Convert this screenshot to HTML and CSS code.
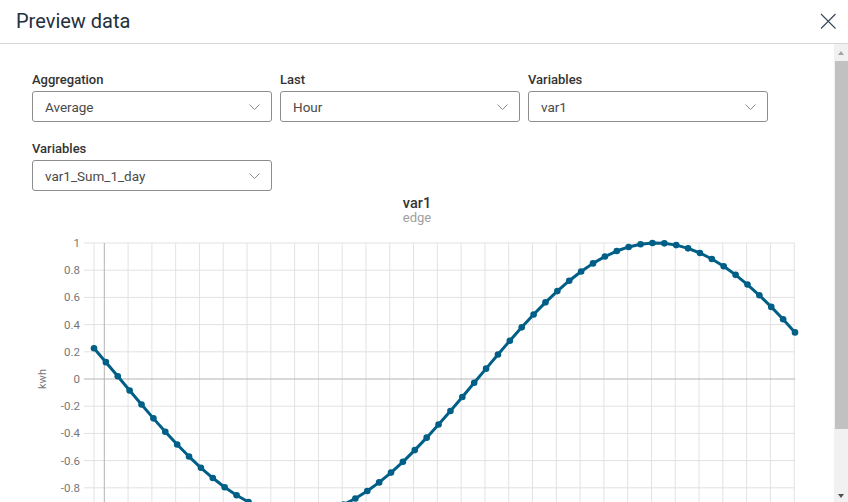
FILE: index.html
```html
<!DOCTYPE html>
<html>
<head>
<meta charset="utf-8">
<title>Preview data</title>
<link rel="stylesheet" href="styles.css">
</head>
<body>
<div class="dialog">
  <header class="dialog-header">
    <h1 class="dialog-title">Preview data</h1>
    <button class="close-btn" aria-label="Close">
      <svg width="16" height="16" viewBox="0 0 16 16"><path d="M1 1L15.5 15.5M15.5 1L1 15.5" stroke="#34465a" stroke-width="1.1" fill="none"/></svg>
    </button>
  </header>
  <div class="dialog-body">
    <div class="content">
      <div class="form">
        <div class="field">
          <label class="field-label">Aggregation</label>
          <div class="select"><span class="select-value">Average</span><svg class="chev" width="11" height="6" viewBox="0 0 11 6"><path d="M0.5 0.5L5.5 5.5L10.5 0.5" stroke="#8a8a8a" stroke-width="1" fill="none"/></svg></div>
        </div>
        <div class="field">
          <label class="field-label">Last</label>
          <div class="select"><span class="select-value">Hour</span><svg class="chev" width="11" height="6" viewBox="0 0 11 6"><path d="M0.5 0.5L5.5 5.5L10.5 0.5" stroke="#8a8a8a" stroke-width="1" fill="none"/></svg></div>
        </div>
        <div class="field">
          <label class="field-label">Variables</label>
          <div class="select"><span class="select-value">var1</span><svg class="chev" width="11" height="6" viewBox="0 0 11 6"><path d="M0.5 0.5L5.5 5.5L10.5 0.5" stroke="#8a8a8a" stroke-width="1" fill="none"/></svg></div>
        </div>
        <div class="field">
          <label class="field-label">Variables</label>
          <div class="select"><span class="select-value">var1_Sum_1_day</span><svg class="chev" width="11" height="6" viewBox="0 0 11 6"><path d="M0.5 0.5L5.5 5.5L10.5 0.5" stroke="#8a8a8a" stroke-width="1" fill="none"/></svg></div>
        </div>
      </div>
      <svg id="chart" class="chart" width="834" height="312" viewBox="0 0 834 312"></svg>
    </div>
    <div class="scrollbar">
      <div class="sb-btn"><span class="arrow-up"></span></div>
      <div class="sb-thumb"></div>
      <div class="sb-track"></div>
      <div class="sb-btn"><span class="arrow-down"></span></div>
    </div>
  </div>
</div>
<script src="chart.js"></script>
</body>
</html>
```

FILE: styles.css
```css
* { box-sizing: border-box; }
html, body { margin: 0; padding: 0; background: #fff; }
body { font-family: Roboto, "Liberation Sans", sans-serif; color: #333; }

.dialog { width: 848px; height: 502px; display: flex; flex-direction: column; overflow: hidden; background: #fff; }

.dialog-header {
  height: 44px; flex: none;
  display: flex; align-items: center; justify-content: space-between;
  padding: 0 12px 0 16px;
  border-bottom: 1px solid #d6d6d6;
}
.dialog-title { margin: 0; font-size: 20px; font-weight: 400; color: #23303e; line-height: 24px; padding-bottom: 1px; }
.close-btn { border: 0; background: none; padding: 0; width: 16px; height: 16px; display: flex; margin-bottom: 2px; }

.dialog-body { flex: 1; display: flex; min-height: 0; }
.content { flex: 1; overflow: hidden; }

.form {
  display: grid;
  grid-template-columns: repeat(3, 240px);
  column-gap: 8px;
  row-gap: 19px;
  padding: 28px 0 0 32px;
}
.field-label { display: block; font-size: 13px; line-height: 16px; font-weight: 500; color: #333; margin-bottom: 3px; }
.select {
  height: 31px;
  border: 1px solid #8d8d8d; border-radius: 3px;
  display: flex; align-items: center; justify-content: space-between;
  padding: 0 11px 0 12px;
}
.select-value { font-size: 13.5px; color: #4a4a4a; }
.chev { display: block; }

.chart { display: block; }

.scrollbar { width: 14px; flex: none; display: flex; flex-direction: column; background: #f1f1f1; }
.sb-btn { height: 17px; display: flex; align-items: center; justify-content: center; }
.sb-thumb { height: 368px; background: #c1c1c1; margin-left: 1px; }
.sb-track { flex: 1; }
.arrow-up { width: 0; height: 0; border-left: 3.5px solid transparent; border-right: 3.5px solid transparent; border-bottom: 4px solid #a3a3a3; margin-top: 1px; }
.arrow-down { width: 0; height: 0; border-left: 3.5px solid transparent; border-right: 3.5px solid transparent; border-top: 4px solid #505050; margin-top: 4px; }
```

FILE: chart.js
```js
(function () {
  var svg = document.getElementById('chart');
  var TOP = 191;
  function Y(v) { return 379 - 136 * v - TOP; }
  var s = '';
  var x0 = 94, x1 = 795;
  // title
  s += '<text x="417" y="16.5" text-anchor="middle" font-family="Roboto, sans-serif" font-size="14.5" font-weight="500" fill="#333">var1</text>';
  s += '<text x="417" y="31" text-anchor="middle" font-family="Roboto, sans-serif" font-size="13" fill="#a0a0a0">edge</text>';
  // horizontal grid
  for (var k = -7; k <= 5; k++) {
    var y = Y(k * 0.2);
    if (k !== 0) s += '<line x1="84" x2="795" y1="' + y + '" y2="' + y + '" stroke="#e2e2e2" stroke-width="1"/>';
  }
  // vertical grid
  var vx = [94];
  for (var j = 0; j <= 29; j++) vx.push(104.3 + j * 23.79);
  vx.forEach(function (x, idx) {
    if (idx === 1) return;
    s += '<line x1="' + x + '" x2="' + x + '" y1="' + Y(1) + '" y2="312" stroke="#e2e2e2" stroke-width="1"/>';
  });
  // zero lines
  s += '<line x1="104.3" x2="104.3" y1="' + Y(1) + '" y2="312" stroke="#b3b3b3" stroke-width="1"/>';
  s += '<line x1="84" x2="795" y1="' + Y(0) + '" y2="' + Y(0) + '" stroke="#b3b3b3" stroke-width="1"/>';
  // y labels (visible ones)
  for (var m = 5; m >= -4; m--) {
    var v = m * 0.2;
    var label = (m === 0) ? '0' : (m % 5 === 0 ? String(m / 5) : v.toFixed(1));
    s += '<text x="80" y="' + (Y(v) + 4) + '" text-anchor="end" font-family="Roboto, sans-serif" font-size="11.5" fill="#777">' + label + '</text>';
  }
  s += '<text transform="translate(46 ' + Y(0) + ') rotate(-90)" text-anchor="middle" font-family="Roboto, sans-serif" font-size="11" fill="#777">kwh</text>';
  // curve
  var pts = [];
  for (var i = 0; i < 60; i++) {
    var x = x0 + i * (x1 - x0) / 59;
    var val = Math.sin(2.913 + i * 0.10444);
    pts.push([x, Y(val)]);
  }
  s += '<polyline fill="none" stroke="#005f87" stroke-width="3" stroke-linejoin="round" points="' + pts.map(function (p) { return p[0].toFixed(2) + ',' + p[1].toFixed(2); }).join(' ') + '"/>';
  pts.forEach(function (p) {
    s += '<circle cx="' + p[0].toFixed(2) + '" cy="' + p[1].toFixed(2) + '" r="3.3" fill="#005f87"/>';
  });
  svg.innerHTML = s;
})();
```
